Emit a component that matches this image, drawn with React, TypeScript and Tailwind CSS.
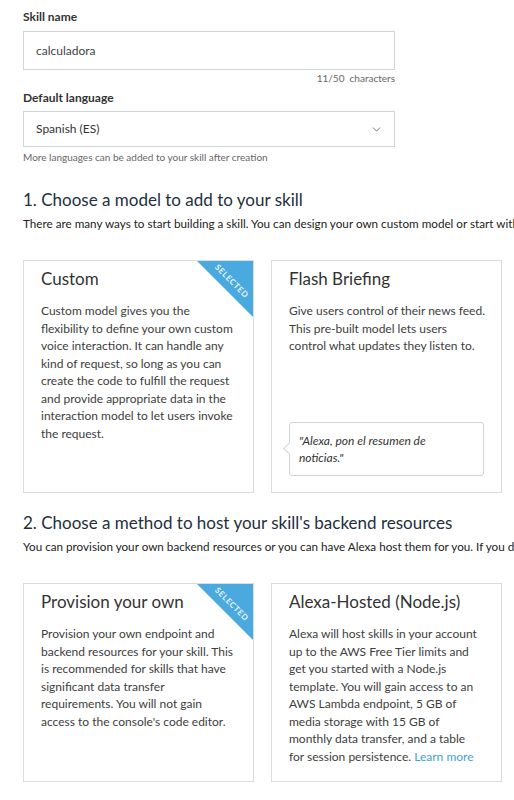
import { ChevronDown } from "lucide-react";

function Ribbon() {
  return (
    <div className="pointer-events-none absolute right-0 top-0 h-[56px] w-[56px] overflow-hidden">
      <div className="absolute right-0 top-0 h-0 w-0 border-l-[56px] border-t-[56px] border-l-transparent border-t-[#4aa9df]" />
      <span className="absolute left-[13px] top-[14px] w-[44px] rotate-45 text-center text-[8px] font-semibold uppercase leading-[12px] tracking-[0.6px] text-white">
        Selected
      </span>
    </div>
  );
}

function Card({
  title,
  selected,
  height,
  children,
}: {
  title: string;
  selected?: boolean;
  height: string;
  children: React.ReactNode;
}) {
  return (
    <div className={`relative flex w-[231px] flex-col border border-[#dadde0] bg-white px-[17px] pt-[6px] pb-[16px] ${height}`}>
      {selected && <Ribbon />}
      <h3 className="text-[17px] leading-[24px] text-[#333]">{title}</h3>
      {children}
    </div>
  );
}

function Body({ lines, link }: { lines: string[]; link?: string }) {
  return (
    <p className="mt-[11px] whitespace-nowrap text-[12px] leading-[17.5px] text-[#3d3d3d]">
      {lines.map((l, i) => (
        <span key={i} className="block">
          {l}
          {link && i === lines.length - 1 && <span className="text-[#3ea2dc]"> {link}</span>}
        </span>
      ))}
    </p>
  );
}

export default function App() {
  return (
    <div className="min-h-[800px] w-[514px] overflow-hidden bg-white pl-[23px] pt-[9px] text-[#333]" style={{ fontFamily: "Lato, 'Open Sans', sans-serif" }}>
      <label className="block text-[12px] font-bold leading-[16px] text-[#333]">Skill name</label>
      <div className="mt-[6px] flex h-[39px] w-[372px] items-center border border-[#cfd4d6] px-[12px] text-[12px] text-[#444]">
        calculadora
      </div>
      <div className="mt-[1px] w-[372px] text-right text-[10px] leading-[14px] text-[#666]">11/50&nbsp; characters</div>
      <label className="mt-[5px] block text-[12px] font-bold leading-[16px] text-[#333]">Default language</label>
      <div className="mt-[5px] flex h-[36px] w-[372px] items-center justify-between border border-[#cfd4d6] pl-[12px] pr-[11px] text-[12px] text-[#333]">
        <span>Spanish (ES)</span>
        <ChevronDown size={13} strokeWidth={1.5} className="text-[#555]" />
      </div>
      <p className="mt-[3px] text-[10px] leading-[14px] text-[#666]">More languages can be added to your skill after creation</p>

      <h2 className="mt-[25px] text-[17px] leading-[22px] text-[#232f3e]">1. Choose a model to add to your skill</h2>
      <p className="mt-[2px] whitespace-nowrap text-[11.7px] leading-[20px] text-[#222]">
        There are many ways to start building a skill. You can design your own custom model or start with a pre-built model.
      </p>

      <div className="mt-[27px] flex gap-[17px]">
        <Card title="Custom" selected height="h-[233px]">
          <Body
            lines={[
              "Custom model gives you the",
              "flexibility to define your own custom",
              "voice interaction. It can handle any",
              "kind of request, so long as you can",
              "create the code to fulfill the request",
              "and provide appropriate data in the",
              "interaction model to let users invoke",
              "the request.",
            ]}
          />
        </Card>
        <Card title="Flash Briefing" height="h-[233px]">
          <Body
            lines={[
              "Give users control of their news feed.",
              "This pre-built model lets users",
              "control what updates they listen to.",
            ]}
          />
          <div className="relative mt-auto flex h-[54px] items-center rounded-[3px] border border-[#cfd4d6] px-[9px]">
            <div className="absolute left-[-5px] top-[21px] h-[9px] w-[9px] rotate-45 border-b border-l border-[#cfd4d6] bg-white" />
            <p className="text-[12px] italic leading-[17.5px] text-[#333]">
              "Alexa, pon el resumen de
              <br />
              noticias."
            </p>
          </div>
        </Card>
      </div>

      <h2 className="mt-[19px] text-[17px] leading-[22px] text-[#232f3e]">2. Choose a method to host your skill's backend resources</h2>
      <p className="mt-[2px] whitespace-nowrap text-[11.7px] leading-[20px] text-[#222]">
        You can provision your own backend resources or you can have Alexa host them for you. If you decide to have Alexa host your skill.
      </p>

      <div className="mt-[27px] flex gap-[17px]">
        <Card title="Provision your own" selected height="h-[199px]">
          <Body
            lines={[
              "Provision your own endpoint and",
              "backend resources for your skill. This",
              "is recommended for skills that have",
              "significant data transfer",
              "requirements. You will not gain",
              "access to the console's code editor.",
            ]}
          />
        </Card>
        <Card title="Alexa-Hosted (Node.js)" height="h-[199px]">
          <Body
            lines={[
              "Alexa will host skills in your account",
              "up to the AWS Free Tier limits and",
              "get you started with a Node.js",
              "template. You will gain access to an",
              "AWS Lambda endpoint, 5 GB of",
              "media storage with 15 GB of",
              "monthly data transfer, and a table",
              "for session persistence.",
            ]}
            link="Learn more"
          />
        </Card>
      </div>
    </div>
  );
}
